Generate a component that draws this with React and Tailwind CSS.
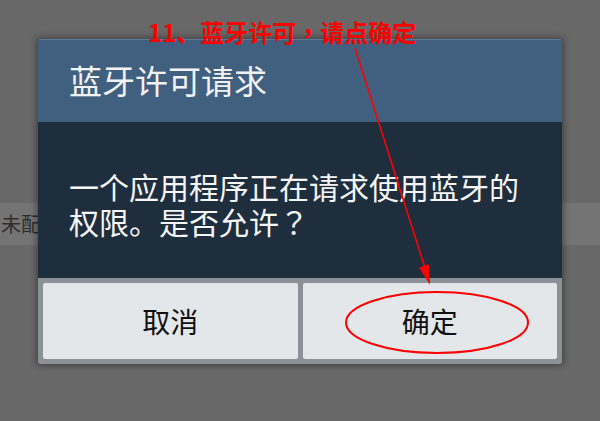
const CJK = { fontFamily: '"Noto Sans CJK SC", "Noto Sans", sans-serif' };
const CJK_TC = { fontFamily: '"Noto Sans CJK TC", "Noto Sans", sans-serif' };

function Annotation() {
  return (
    <>
      <div
        className="absolute left-[148px] top-[20px] text-[24px] leading-none font-bold text-[#ff0000] whitespace-nowrap"
        style={CJK}
      >
        11、蓝牙许可<span style={CJK_TC}>，</span>请点确定
      </div>
      <svg className="absolute left-0 top-0 pointer-events-none" width="600" height="421">
        <line x1="355" y1="48" x2="425" y2="268" stroke="#ff0000" strokeWidth="1.6" />
        <polygon points="430,285 428.8,264.3 419.2,267.4" fill="#ff0000" />
        <ellipse cx="437" cy="322.5" rx="91" ry="30.5" fill="none" stroke="#ff0000" strokeWidth="2" />
      </svg>
    </>
  );
}

export default function App() {
  return (
    <div className="relative h-[421px] w-[600px] overflow-hidden bg-[#686868]" style={CJK}>
      {/* page behind the dialog */}
      <div className="pt-[203px]">
        <div className="flex h-[42px] items-center bg-[#747474] pl-[1px]">
          <span className="text-[20px] leading-none text-[#2e2e2e]">未配</span>
        </div>
      </div>

      {/* dialog */}
      <div className="absolute left-[38px] top-[39px] w-[524px] overflow-hidden rounded-[3px] bg-[#8b9197] shadow-[0_0_6px_2px_rgba(0,0,0,0.35)]">
        <div className="flex h-[83px] items-center border-t border-[#5b7a99] bg-[#415f7e] pl-[31px] text-[33px] text-[#f2f2f2]">
          蓝牙许可请求
        </div>
        <div className="h-[156px] bg-[#1f2e3d] pl-[31px] pt-[47px] text-[30px] leading-[35px] text-[#f5f5f5]">
          <p>一个应用程序正在请求使用蓝牙的</p>
          <p>
            权限。是否允许<span style={CJK_TC}>？</span>
          </p>
        </div>
        <div className="flex gap-[5px] p-[5px]">
          <button className="flex h-[76px] flex-1 items-center justify-center rounded-[2px] bg-[#e3e7ea] text-[28px] text-[#111]">
            取消
          </button>
          <button className="flex h-[76px] flex-1 items-center justify-center rounded-[2px] bg-[#e3e7ea] text-[28px] text-[#111]">
            确定
          </button>
        </div>
      </div>

      <Annotation />
    </div>
  );
}
